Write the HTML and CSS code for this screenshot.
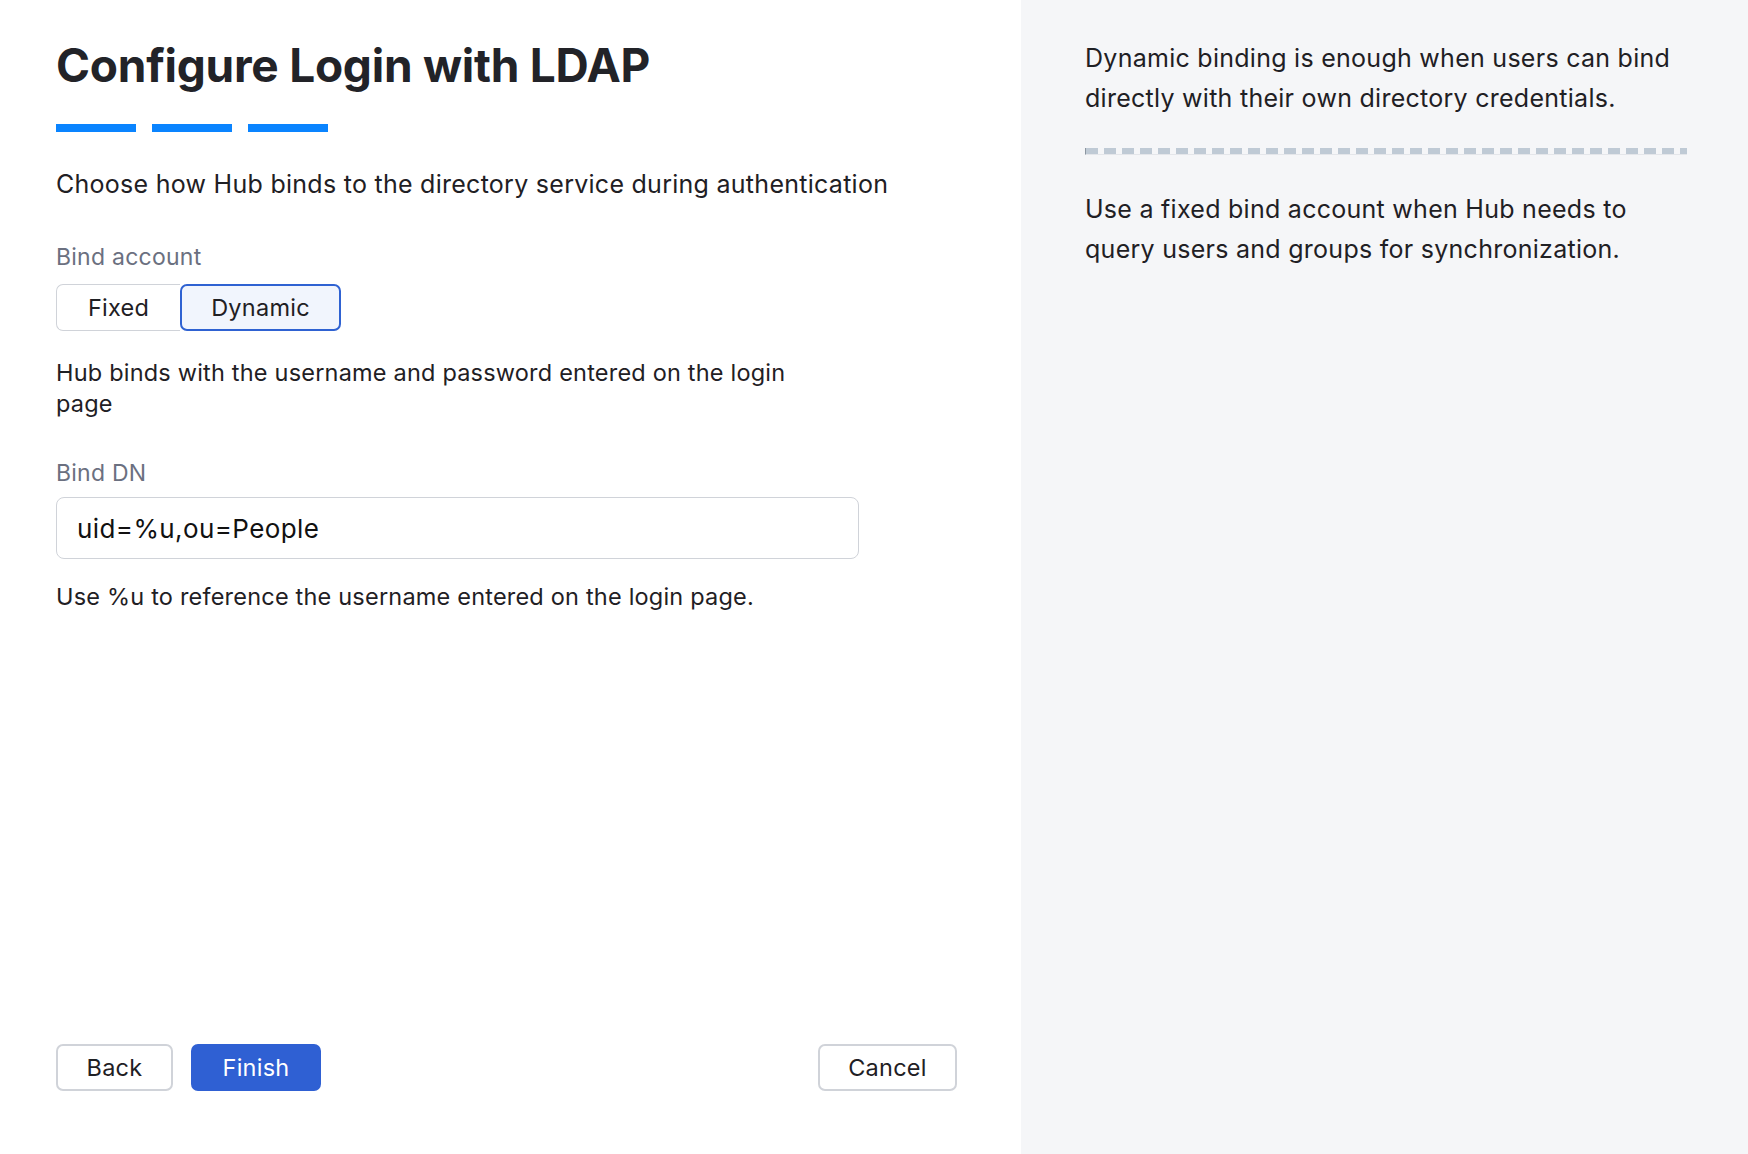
FILE: index.html
```
<!DOCTYPE html>
<html lang="en">
<head>
    <meta charset="UTF-8">
    <meta name="viewport" content="width=device-width, initial-scale=1.0">
    <title>Configure Login with LDAP</title>
    <link rel="stylesheet" href="styles.css">
</head>
<body>
    <div class="page">
        <main class="main">
            <h1>Configure Login with LDAP</h1>

            <!-- step indicator -->
            <div class="steps">
                <span class="step"></span>
                <span class="step"></span>
                <span class="step"></span>
            </div>

            <p class="lead">Choose how Hub binds to the directory service during authentication</p>

            <div class="field-label">Bind account</div>
            <div class="segmented">
                <button class="seg seg-fixed">Fixed</button>
                <button class="seg seg-dynamic active">Dynamic</button>
            </div>

            <p class="desc">Hub binds with the username and password entered on the login page</p>

            <label class="field-label dn-label" for="bindDn">Bind DN</label>
            <input type="text" id="bindDn" class="text-input" value="uid=%u,ou=People">

            <p class="help">Use %u to reference the username entered on the login page.</p>

            <div class="footer">
                <button class="btn back">Back</button>
                <button class="btn primary">Finish</button>
                <button class="btn cancel">Cancel</button>
            </div>
        </main>

        <aside class="aside">
            <p class="note">Dynamic binding is enough when users can bind directly with their own directory credentials.</p>
            <div class="divider"></div>
            <p class="note second">Use a fixed bind account when Hub needs to query users and groups for synchronization.</p>
        </aside>
    </div>
</body>
</html>
```

FILE: styles.css
```
* {
    box-sizing: border-box;
}
body {
    margin: 0;
    font-family: Inter, "Noto Sans", Arial, sans-serif;
    color: #1f2024;
    background: #fff;
}
.page {
    display: flex;
    height: 100vh;
}
.main {
    width: 1021px;
    padding: 37px 64px 63px 56px;
    display: flex;
    flex-direction: column;
}
h1 {
    margin: 0;
    font-size: 46px;
    line-height: 56px;
    font-weight: 700;
    letter-spacing: -0.25px;
    color: #222328;
}
.steps {
    display: flex;
    gap: 16px;
    margin-top: 31px;
}
.step {
    width: 80px;
    height: 8px;
    background-color: #0a84ff;
}
.lead {
    margin: 36px 0 0;
    font-size: 25px;
    line-height: 32px;
    letter-spacing: 0.27px;
}
.field-label {
    display: block;
    margin-top: 43px;
    font-size: 23px;
    line-height: 28px;
    letter-spacing: 0.25px;
    color: #6b7080;
}
.segmented {
    display: flex;
    margin-top: 13px;
}
.seg {
    height: 47px;
    padding: 0;
    font-family: inherit;
    font-size: 23.5px;
    letter-spacing: 0.25px;
    color: #1f2024;
    background: #fff;
    border: 1.5px solid #d0d3d9;
    border-right: none;
    border-radius: 7px 0 0 7px;
    cursor: pointer;
}
.seg-fixed {
    width: 124px;
}
.seg-dynamic {
    width: 161px;
}
.seg.active {
    background: #f1f5fd;
    border: 2px solid #2f62d2;
    border-radius: 7px;
}
.desc {
    max-width: 760px;
    margin: 26px 0 0;
    font-size: 23.5px;
    line-height: 31px;
    letter-spacing: 0.2px;
}
.dn-label {
    margin-top: 40px;
}
.text-input {
    width: 803px;
    height: 62px;
    margin-top: 10px;
    padding: 0 20px;
    font-family: inherit;
    font-size: 26px;
    letter-spacing: 0.4px;
    color: #111;
    border: 1.5px solid #d0d3d9;
    border-radius: 8px;
}
.help {
    margin: 22px 0 0;
    font-size: 23.5px;
    line-height: 31px;
    letter-spacing: 0.2px;
}
.footer {
    margin-top: auto;
    display: flex;
    gap: 18px;
}
.btn {
    height: 47px;
    padding: 0;
    font-family: inherit;
    font-size: 23.5px;
    letter-spacing: 0.25px;
    color: #1f2024;
    background: #fff;
    border: 2px solid #d0d3d9;
    border-radius: 7px;
    cursor: pointer;
}
.btn.back {
    width: 117px;
}
.btn.primary {
    width: 130px;
    background: #2f60d3;
    border-color: #2f60d3;
    color: #fff;
}
.btn.cancel {
    width: 139px;
    margin-left: auto;
}
.aside {
    flex: 1;
    background: #f5f6f8;
    padding: 38px 61px 0 64px;
}
.note {
    margin: 0;
    font-size: 25px;
    line-height: 40px;
    letter-spacing: 0.27px;
}
.divider {
    height: 7px;
    margin-top: 30px;
    border-left: 1px solid #8c96a0;
    border-bottom: 1px solid #e4e6ea;
    background: repeating-linear-gradient(to right, #bfcad5 0 12px, transparent 12px 18px);
    background-size: 100% 6px;
    background-repeat: no-repeat;
}
.note.second {
    margin-top: 34px;
}
```
